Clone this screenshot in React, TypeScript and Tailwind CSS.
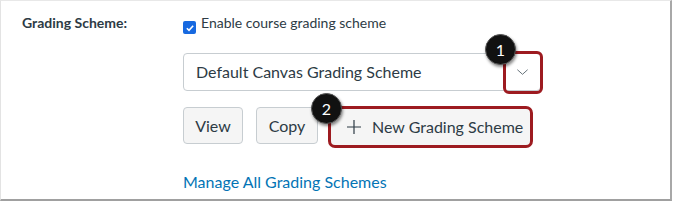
const font = { fontFamily: 'Lato, "Noto Sans", sans-serif' };

function Badge({ n }: { n: string }) {
  return (
    <div className="flex h-[31px] w-[31px] items-center justify-center rounded-full border border-[#555] bg-[#111] text-[16px] leading-none text-white shadow-[1px_2px_3px_rgba(0,0,0,0.45)]">
      {n}
    </div>
  );
}

export default function App() {
  return (
    <div className="h-[205px] w-[673px] bg-white text-[#2d3b45]" style={font}>
      <div className="flex h-[201px] w-[672px] border-l border-t border-r-2 border-b-2 border-l-[#e3e3e3] border-t-[#e8e8e8] border-r-[#a8a8a8] border-b-[#a0a0a0] pl-[21px] pt-[12px]">
        <div className="w-[161px] text-[14px] font-bold leading-[20px]">Grading Scheme:</div>

        <div className="flex flex-col">
          <label className="flex h-[20px] items-start gap-[5px] text-[14px] leading-[20px]">
            <span className="mt-[8px] flex h-[13px] w-[13px] items-center justify-center rounded-[2px] bg-[#1769e0]">
              <svg viewBox="0 0 12 12" className="h-[10px] w-[10px]">
                <path d="M2.2 6.3 L4.8 8.8 L9.8 3.2" fill="none" stroke="white" strokeWidth="1.9" />
              </svg>
            </span>
            Enable course grading scheme
          </label>

          <div className="relative mt-[20px] flex h-[38px] w-[358px] items-center rounded-[4px] border border-[#c7cdd1] bg-white pl-[12px] text-[16px]">
            Default Canvas Grading Scheme
            <svg viewBox="0 0 14 7" className="absolute right-[11px] top-[15px] h-[6px] w-[13px]">
              <path d="M1 0.8 L7 6.2 L13 0.8" fill="none" stroke="#5f6b73" strokeWidth="1.1" />
            </svg>
            <div className="absolute right-[-3px] top-[-3px] h-[43px] w-[40px] rounded-[6px] border-[3px] border-[#9d1b20]" />
            <div className="absolute left-[301px] top-[-20px]">
              <Badge n="1" />
            </div>
          </div>

          <div className="mt-[16px] flex items-start">
            <button className="h-[37px] w-[60px] rounded-[4px] border border-[#c7cdd1] bg-[#f5f5f5] text-[16px]">
              View
            </button>
            <button className="ml-[13px] h-[37px] w-[62px] rounded-[4px] border border-[#c7cdd1] bg-[#f5f5f5] text-[16px]">
              Copy
            </button>
            <div className="relative ml-[10px] mt-[-1px]">
              <button className="flex h-[42px] w-[205px] items-center gap-[10px] rounded-[7px] border-[3px] border-[#9d1b20] bg-[#f5f5f5] pl-[15px] text-[16px]">
                <svg viewBox="0 0 16 16" className="h-[16px] w-[16px]">
                  <path d="M8 1 V15 M1 8 H15" fill="none" stroke="#2d3b45" strokeWidth="1.2" />
                </svg>
                New Grading Scheme
              </button>
              <div className="absolute left-[-17px] top-[-13px]">
                <Badge n="2" />
              </div>
            </div>
          </div>

          <a className="mt-[22px] text-[16px] leading-[24px] text-[#0374b5]">Manage All Grading Schemes</a>
        </div>
      </div>
    </div>
  );
}
